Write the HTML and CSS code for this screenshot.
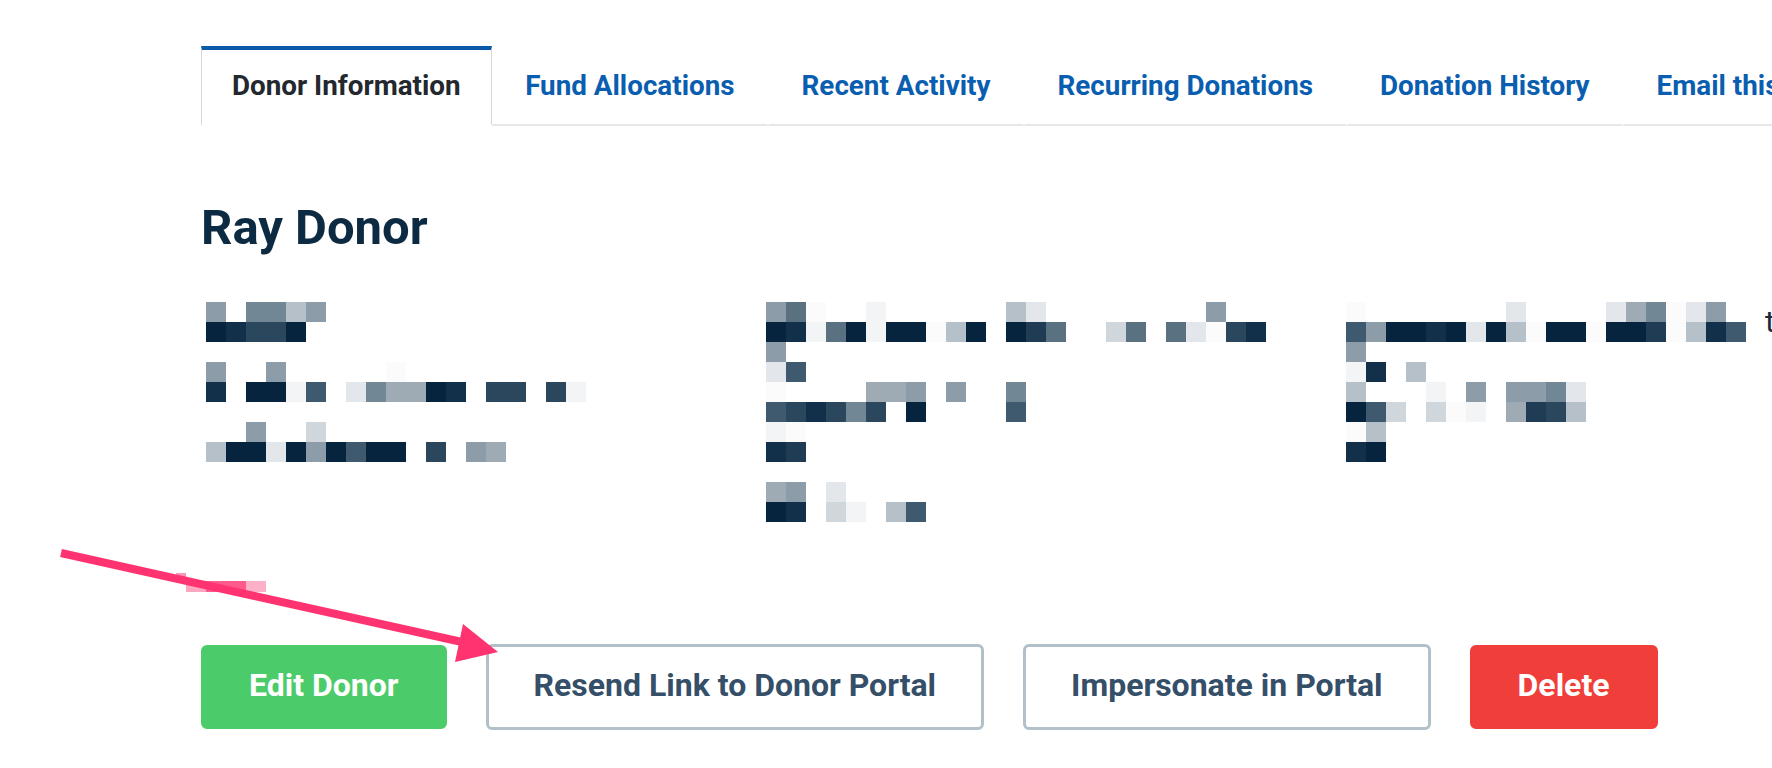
FILE: index.html
```html
<!DOCTYPE html>
<html lang="en">
<head>
<meta charset="utf-8">
<title>Ray Donor</title>
<link rel="stylesheet" href="styles.css">
</head>
<body>
<div class="page">
  <nav class="tabs">
    <a class="tab active">Donor Information</a>
    <a class="tab">Fund Allocations</a>
    <a class="tab">Recent Activity</a>
    <a class="tab">Recurring Donations</a>
    <a class="tab">Donation History</a>
    <a class="tab">Email this Donor</a>
    <span class="tab-fill"></span>
  </nav>

  <h1 class="donor-name">Ray Donor</h1>

  <section class="info">
    <div class="col col1">
      <div class="r"><i class="h"></i><i></i><i class="g"></i><i class="g"></i><i class="k"></i><i class="h"></i></div>
      <div class="r"><i class="a"></i><i class="b"></i><i class="d"></i><i class="d"></i><i class="a"></i></div>
      <div class="r"></div>
      <div class="r"><i class="h"></i><i></i><i></i><i class="h"></i><i></i><i></i><i></i><i></i><i></i><i class="o"></i></div>
      <div class="r"><i class="b"></i><i></i><i class="a"></i><i class="a"></i><i class="n"></i><i class="e"></i><i></i><i class="m"></i><i class="g"></i><i class="j"></i><i class="j"></i><i class="a"></i><i class="b"></i><i></i><i class="d"></i><i class="d"></i><i></i><i class="d"></i><i class="n"></i></div>
      <div class="r"></div>
      <div class="r"><i></i><i></i><i class="h"></i><i></i><i></i><i class="l"></i></div>
      <div class="r"><i class="k"></i><i class="a"></i><i class="a"></i><i class="m"></i><i class="a"></i><i class="h"></i><i class="a"></i><i class="e"></i><i class="a"></i><i class="a"></i><i></i><i class="d"></i><i></i><i class="h"></i><i class="j"></i></div>
    </div>

    <div class="col col2">
      <div class="r"><i class="h"></i><i class="f"></i><i class="o"></i><i></i><i></i><i class="n"></i><i></i><i></i><i></i><i></i><i></i><i></i><i class="k"></i><i class="m"></i><i></i><i></i><i></i><i></i><i></i><i></i><i></i><i></i><i class="h"></i></div>
      <div class="r"><i class="a"></i><i class="b"></i><i class="n"></i><i class="f"></i><i class="a"></i><i class="n"></i><i class="a"></i><i class="a"></i><i class="o"></i><i class="k"></i><i class="a"></i><i></i><i class="a"></i><i class="c"></i><i class="f"></i><i></i><i></i><i class="l"></i><i class="f"></i><i></i><i class="f"></i><i class="m"></i><i class="o"></i><i class="d"></i><i class="b"></i></div>
      <div class="r"><i class="h"></i></div>
      <div class="r"><i class="m"></i><i class="e"></i></div>
      <div class="r"><i class="o"></i><i></i><i></i><i></i><i></i><i class="j"></i><i class="j"></i><i class="h"></i><i></i><i class="h"></i><i></i><i></i><i class="g"></i></div>
      <div class="r"><i class="e"></i><i class="d"></i><i class="b"></i><i class="d"></i><i class="g"></i><i class="d"></i><i></i><i class="a"></i><i></i><i></i><i></i><i></i><i class="e"></i></div>
      <div class="r"><i class="n"></i><i class="o"></i></div>
      <div class="r"><i class="b"></i><i class="c"></i></div>
      <div class="r"></div>
      <div class="r"><i class="j"></i><i class="h"></i><i></i><i class="m"></i></div>
      <div class="r"><i class="a"></i><i class="b"></i><i></i><i class="l"></i><i class="n"></i><i></i><i class="k"></i><i class="e"></i></div>
    </div>

    <div class="col col3">
      <div class="r"><i class="o"></i><i></i><i></i><i></i><i></i><i></i><i></i><i></i><i class="m"></i><i></i><i></i><i></i><i></i><i class="m"></i><i class="j"></i><i class="g"></i><i class="o"></i><i class="m"></i><i class="h"></i></div>
      <div class="r"><i class="e"></i><i class="h"></i><i class="a"></i><i class="a"></i><i class="b"></i><i class="a"></i><i class="m"></i><i class="a"></i><i class="k"></i><i class="o"></i><i class="a"></i><i class="a"></i><i class="o"></i><i class="a"></i><i class="a"></i><i class="c"></i><i class="o"></i><i class="k"></i><i class="b"></i><i class="e"></i><span class="tail">t</span></div>
      <div class="r"><i class="h"></i></div>
      <div class="r"><i class="n"></i><i class="b"></i><i></i><i class="k"></i></div>
      <div class="r"><i class="k"></i><i></i><i></i><i></i><i class="n"></i><i></i><i class="h"></i><i></i><i class="h"></i><i class="h"></i><i class="g"></i><i class="m"></i></div>
      <div class="r"><i class="a"></i><i class="e"></i><i class="l"></i><i></i><i class="l"></i><i class="o"></i><i class="n"></i><i></i><i class="j"></i><i class="c"></i><i class="d"></i><i class="k"></i></div>
      <div class="r"><i class="o"></i><i class="k"></i></div>
      <div class="r"><i class="b"></i><i class="a"></i></div>
    </div>
  </section>

  <div class="actions">
    <button class="btn btn-green">Edit Donor</button>
    <button class="btn btn-outline">Resend Link to Donor Portal</button>
    <button class="btn btn-outline">Impersonate in Portal</button>
    <button class="btn btn-red">Delete</button>
  </div>
</div>

<svg class="annotation" width="1772" height="768" viewBox="0 0 1772 768" aria-hidden="true">
  <rect x="176" y="573" width="10" height="10" fill="#f798b6"/>
  <rect x="186" y="581" width="20" height="11" fill="#fca6c2"/>
  <rect x="206" y="581" width="40" height="11" fill="#ff5a8c"/>
  <rect x="246" y="581" width="20" height="11" fill="#fdb1c9"/>
  <line x1="61" y1="553" x2="462" y2="642" stroke="#ff3370" stroke-width="8"/>
  <polygon points="498,652 463,624 455,662" fill="#ff3370"/>
</svg>
</body>
</html>
```

FILE: styles.css
```css
html, body {
  margin: 0;
  padding: 0;
  background: #ffffff;
  overflow: hidden;
}

body {
  width: 1772px;
  height: 768px;
  position: relative;
  font-family: Roboto, "Liberation Sans", Arial, sans-serif;
}

.page {
  padding: 46px 0 0 201px;
}

/* Tabs */
.tabs {
  display: flex;
  flex-wrap: nowrap;
  white-space: nowrap;
  overflow: hidden;
}

.tab {
  box-sizing: border-box;
  height: 80px;
  display: flex;
  align-items: center;
  padding: 0 32.5px 3px;
  border-top: 4px solid transparent;
  border-left: 1px solid transparent;
  border-right: 1px solid transparent;
  border-bottom: 2px solid #e7e7e7;
  font-size: 27.8px;
  font-weight: 700;
  color: #0a5eb0;
  flex-shrink: 0;
}

.tab.active {
  padding: 0 30px 3px;
  border-top-color: #0a5aaa;
  border-left-color: #d6d6d6;
  border-right-color: #d6d6d6;
  border-bottom-color: #ffffff;
  color: #23282e;
}

.tab-fill {
  flex: 1 0 200px;
  border-bottom: 2px solid #e7e7e7;
}

/* Heading */
.donor-name {
  margin: 78px 0 0;
  font-size: 49px;
  line-height: 48px;
  font-weight: 700;
  color: #0c2a42;
}

/* Pixelated info block */
.info {
  display: flex;
  margin-top: 50px;
  padding-left: 5px;
}

.col1 { width: 560px; flex-shrink: 0; }
.col2 { width: 580px; flex-shrink: 0; }
.col3 { flex: 1; }

.r {
  display: flex;
  height: 20px;
}

.r i {
  display: block;
  width: 20px;
  height: 20px;
  flex-shrink: 0;
}

.r .tail {
  margin: -10px 0 0 19px;
  font-size: 30px;
  line-height: 20px;
  color: #1c2b39;
}

.a { background: #07243f; }
.b { background: #12304a; }
.c { background: #1f3c54; }
.d { background: #2b475d; }
.e { background: #3f5a6e; }
.f { background: #5a7182; }
.g { background: #728795; }
.h { background: #8c9ca8; }
.j { background: #9eabb5; }
.k { background: #b5c0c8; }
.l { background: #cfd7dc; }
.m { background: #e3e7eb; }
.n { background: #f2f4f6; }
.o { background: #fbfbfc; }

/* Buttons */
.actions {
  display: flex;
  align-items: center;
  gap: 39px;
  margin-top: 122px;
}

.btn {
  box-sizing: border-box;
  height: 84px;
  padding: 0 45px 4px;
  border: 3px solid transparent;
  border-radius: 6px;
  font-family: Roboto, "Liberation Sans", Arial, sans-serif;
  font-size: 32px;
  font-weight: 700;
  white-space: nowrap;
}

.btn-green {
  background: #4ccb6b;
  border-color: #4ccb6b;
  color: #ffffff;
}

.btn-outline {
  height: 86px;
  background: #ffffff;
  border-color: #b2c0ca;
  color: #354f69;
}

.btn-red {
  background: #f03f3b;
  border-color: #f03f3b;
  color: #ffffff;
}

/* Annotation overlay */
.annotation {
  position: absolute;
  left: 0;
  top: 0;
  pointer-events: none;
}
```
